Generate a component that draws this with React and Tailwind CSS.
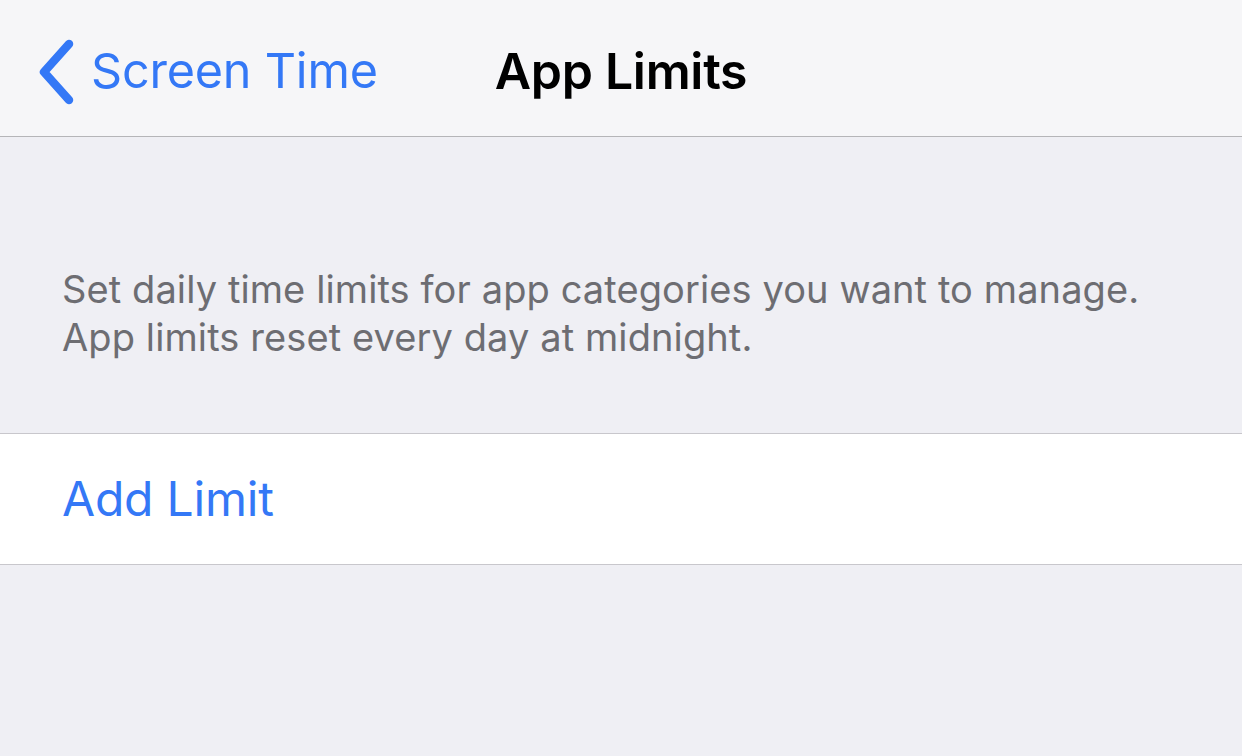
import React from 'react';

function ChevronLeft() {
	return (
		<svg width="40" height="66" viewBox="0 0 40 66" fill="none" className="shrink-0">
			<path
				d="M33 5 L8 33 L33 61"
				stroke="#3478f6"
				strokeWidth="8.5"
				strokeLinecap="round"
				strokeLinejoin="round"
			/>
		</svg>
	);
}

export default function App() {
	return (
		<div
			className="w-[1242px] h-[756px] flex flex-col bg-[#efeff4] overflow-hidden"
			style={{ fontFamily: 'Inter, "Noto Sans", sans-serif' }}
		>
			<div className="h-[137px] shrink-0 bg-[#f6f6f8] border-b border-[#b5b5b8] relative flex items-center">
				<div className="flex items-center pl-[36px] gap-[15px] text-[#3478f6] text-[48.5px] tracking-[-0.2px] pt-[8px]">
					<ChevronLeft />
					<span className="leading-none pb-[2px]">Screen Time</span>
				</div>
				<div className="absolute left-0 right-0 top-0 h-[137px] flex items-center justify-center pt-[4px]">
					<span className="text-[50px] font-semibold text-black leading-none tracking-[-0.3px]">App Limits</span>
				</div>
			</div>

			<div className="pt-[128px] pb-[72px] px-[62px] text-[#6d6d72] text-[38px] leading-[48px] tracking-[0.1px]">
				<p>Set daily time limits for app categories you want to manage.</p>
				<p>App limits reset every day at midnight.</p>
			</div>

			<div className="h-[132px] shrink-0 bg-white border-y border-[#c8c7cc] flex items-center px-[62px]">
				<span className="text-[#3478f6] text-[48px] leading-none tracking-[-0.2px]">Add Limit</span>
			</div>
		</div>
	);
}
